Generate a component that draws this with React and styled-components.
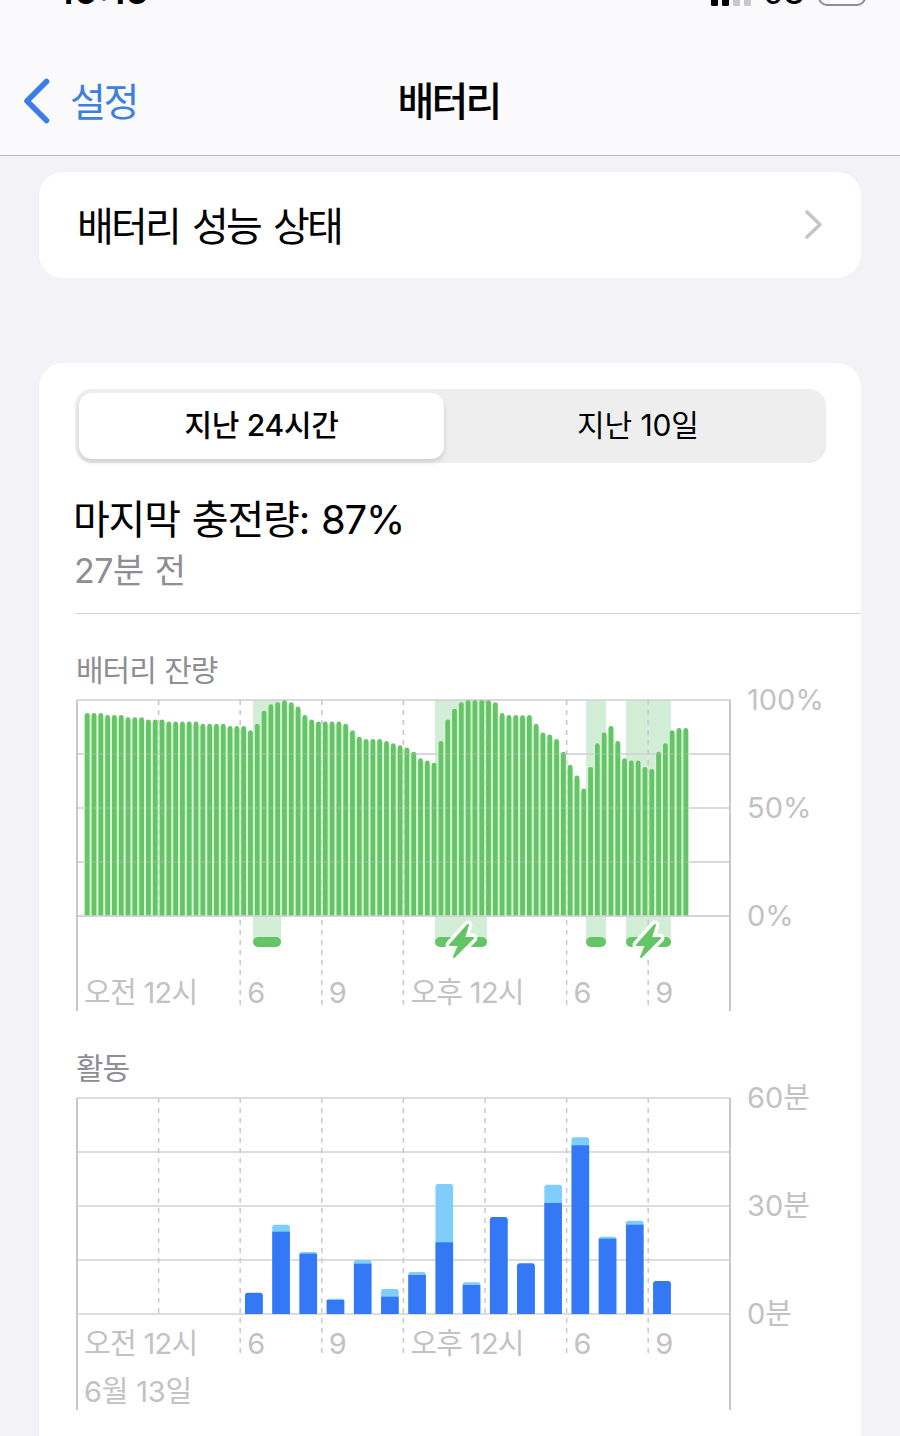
import React from 'react';
import styled, { createGlobalStyle } from 'styled-components';

const FONT = `Inter, "Noto Sans CJK KR", sans-serif`;

const GlobalStyle = createGlobalStyle`
  html, body {
    margin: 0;
    background: #f2f2f7;
    font-family: ${FONT};
  }
`;

// battery level in percent, one bar per 15 minutes
const LEVELS = [
  94, 94, 94, 93, 93, 93, 92, 92, 92, 91, 91, 91, 90, 90, 90, 90, 90, 89, 89, 89, 89, 88, 88, 88,
  86, 89, 95, 98, 99, 100, 99, 97, 93, 91, 90, 90, 90, 90, 89, 86, 83, 82, 82, 82, 81, 80, 79,
  78, 76, 73, 72, 71, 81, 91, 96, 99, 100, 100, 100, 100, 99, 94, 93, 93, 93, 93, 89, 85, 84, 82,
  76, 70, 65, 59, 69, 80, 85, 88, 81, 73, 72, 72, 69, 68, 76, 80, 86, 87, 87,
];

// [on-screen px, background px] per hour, starting from 6
const ACTIVITY = [
  [21.3, 0], [82.3, 7], [60.3, 1.7], [14, 1.3], [50.3, 3.7], [17.3, 7.7], [39, 3], [71.7, 58.3],
  [29, 2.7], [97, 0], [50.7, 0], [111, 18.3], [168.7, 8], [75.3, 2], [89.3, 4], [33, 0],
];

const CHARGE_BANDS = [
  { x: 176, w: 28 },
  { x: 358, w: 52, bolt: 384 },
  { x: 509, w: 20 },
  { x: 549, w: 45, bolt: 571 },
];

const SLOT = 81.6;
const PLOT_W = 653;
const PLOT_H = 216;
const GRID = '#d2d2d4';
const FRAME = '#c9c9cc';

const Page = styled.div`
  height: 1436px;
  overflow: hidden;
  background: #f2f2f7;
`;

const NavBar = styled.header`
  height: 156px;
  box-sizing: border-box;
  background: #fafafc;
  border-bottom: 1px solid #bcbcc0;
  overflow: hidden;
`;

const StatusRow = styled.div`
  height: 40px;
  margin-top: -29px;
  padding: 0 34px 0 58px;
  display: flex;
  align-items: flex-end;
  justify-content: space-between;
`;

const Clock = styled.span`
  font-size: 37px;
  line-height: 40px;
  font-weight: 600;
  color: #000;
`;

const StatusIcons = styled.div`
  display: flex;
  align-items: flex-end;
  gap: 13px;
`;

const StatusGlyph = styled.svg`
  display: block;
  margin-bottom: 5px;
`;

const Network = styled.span`
  margin-bottom: -2px;
  font-size: 30px;
  line-height: 40px;
  font-weight: 500;
  color: #000;
`;

const NavRow = styled.div`
  position: relative;
  margin-top: 65px;
  height: 50px;
  padding-left: 23px;
  display: flex;
  align-items: center;
  gap: 20px;
`;

const BackLabel = styled.span`
  padding-top: 2px;
  font-size: 39px;
  letter-spacing: -2.4px;
  color: #3f80dd;
  line-height: 50px;
`;

const NavTitle = styled.h1`
  position: absolute;
  left: 0;
  right: 3px;
  top: 1px;
  margin: 0;
  text-align: center;
  font-size: 40px;
  font-weight: 500;
  letter-spacing: -2.8px;
  line-height: 50px;
  color: #000;
`;

const Content = styled.main`
  padding: 16px 39px 0;
  display: flex;
  flex-direction: column;
  gap: 85px;
`;

const Card = styled.section`
  background: #fff;
  border-radius: 24px;
`;

const LinkRow = styled(Card)`
  height: 106px;
  box-sizing: border-box;
  padding: 0 38px 2px;
  display: flex;
  align-items: center;
  justify-content: space-between;
  font-size: 40px;
  letter-spacing: -2.8px;
  word-spacing: 4.5px;
  color: #000;
`;

const UsageCard = styled(Card)`
  padding: 26px 0 60px 36px;
`;

const Segments = styled.div`
  width: 751px;
  height: 74px;
  box-sizing: border-box;
  padding: 4px;
  border-radius: 17px;
  background: #eeeeef;
  display: grid;
  grid-template-columns: 365px 1fr;
`;

const Segment = styled.div`
  display: flex;
  align-items: center;
  justify-content: center;
  padding: 0 0 6px ${(p) => (p.$active ? 0 : 10)}px;
  font-size: 30px;
  letter-spacing: ${(p) => (p.$active ? -0.3 : -0.1)}px;
  color: #000;
  border-radius: 13px;
  font-weight: ${(p) => (p.$active ? 500 : 400)};
  background: ${(p) => (p.$active ? '#fff' : 'transparent')};
  box-shadow: ${(p) => (p.$active ? '0 3px 5px rgba(0, 0, 0, 0.14)' : 'none')};
`;

const Headline = styled.div`
  margin: 31px 0 0 -2px;
  font-size: 40px;
  line-height: 52px;
  letter-spacing: -1.2px;
  word-spacing: 2px;
  color: #000;
`;

const SubLine = styled.div`
  margin: 1px 0 0 -1px;
  font-size: 34px;
  line-height: 48px;
  letter-spacing: -0.5px;
  word-spacing: 2px;
  color: #8e8e93;
`;

const Divider = styled.hr`
  margin: 18px 0 0;
  border: 0;
  border-top: 1px solid #d4d4d6;
`;

const SectionTitle = styled.h2`
  margin: ${(p) => p.$top}px 0 0 1px;
  height: 40px;
  font-size: 30px;
  font-weight: 400;
  line-height: 40px;
  letter-spacing: -1px;
  word-spacing: 1px;
  color: #8e8e93;
`;

const ChartRow = styled.div`
  margin: 10px 0 0 2px;
  display: flex;
  gap: 17px;
`;

const Plot = styled.div`
  position: relative;
  width: ${PLOT_W}px;
`;

const PlotSvg = styled.svg`
  display: block;
  overflow: visible;
`;

const AxisRow = styled.div`
  position: absolute;
  left: 0;
  top: ${(p) => p.$top}px;
  display: grid;
  grid-template-columns: repeat(8, ${SLOT}px);
`;

const AxisLabel = styled.span`
  grid-column: span ${(p) => p.$span || 1};
  padding-left: 7px;
  font-size: 29px;
  line-height: 36px;
  letter-spacing: -0.7px;
  color: #c2c2c4;
  white-space: nowrap;
`;

const DateLabel = styled(AxisLabel)`
  position: absolute;
  left: 0;
  top: ${(p) => p.$top}px;
  letter-spacing: -0.2px;
`;

const YAxis = styled.div`
  height: ${PLOT_H}px;
  margin-top: ${(p) => p.$shift}px;
  display: flex;
  flex-direction: column;
  justify-content: space-between;
`;

const YLabel = styled.span`
  height: 0;
  display: flex;
  align-items: center;
  font-size: 29px;
  color: #c2c2c4;
  white-space: nowrap;
`;

function ChartGrid({ height, opacity = 1 }) {
  const rows = [0, 54, 108, 162, 216];
  const columns = [1, 2, 3, 4, 5, 6, 7];
  return (
    <g opacity={opacity}>
      {rows.map((y) => (
        <line key={y} x1="0" x2={PLOT_W} y1={y} y2={y} stroke={GRID} strokeWidth="1.5" />
      ))}
      {columns.map((c) => (
        <line
          key={c}
          x1={c * SLOT}
          x2={c * SLOT}
          y1="0"
          y2={c === 1 || c === 5 ? PLOT_H : height}
          stroke={FRAME}
          strokeWidth="1.5"
          strokeDasharray="5 5"
        />
      ))}
    </g>
  );
}

function Frame({ height }) {
  return (
    <g>
      <line x1="0" x2="0" y1="0" y2={height} stroke={FRAME} strokeWidth="2" />
      <line x1={PLOT_W} x2={PLOT_W} y1="0" y2={height} stroke={FRAME} strokeWidth="2" />
    </g>
  );
}

function Bolt({ x }) {
  const d = 'M7 -16 L-11 4 L-2 4 L-7 16 L12 -3 L3 -3 Z';
  return (
    <g transform={`translate(${x} ${PLOT_H + 25})`}>
      <path d={d} fill="#fff" stroke="#fff" strokeWidth="9" strokeLinejoin="round" />
      <path d={d} fill="#65c466" stroke="#65c466" strokeWidth="2" strokeLinejoin="round" />
    </g>
  );
}

function AxisLabels({ top }) {
  return (
    <AxisRow $top={top}>
      <AxisLabel $span={2}>오전 12시</AxisLabel>
      <AxisLabel>6</AxisLabel>
      <AxisLabel>9</AxisLabel>
      <AxisLabel $span={2}>오후 12시</AxisLabel>
      <AxisLabel>6</AxisLabel>
      <AxisLabel>9</AxisLabel>
    </AxisRow>
  );
}

function BatteryChart() {
  const pitch = PLOT_W / 96;
  return (
    <Plot>
      <PlotSvg width={PLOT_W} height="311" viewBox={`0 0 ${PLOT_W} 311`}>
        {CHARGE_BANDS.map((b) => (
          <rect key={b.x} x={b.x} y="0" width={b.w} height={PLOT_H + 26} fill="#d3eed6" />
        ))}
        <ChartGrid height={308} />
        {LEVELS.map((level, i) => {
          const h = (level / 100) * PLOT_H;
          const x = (i + 1) * pitch + 1;
          return (
            <g key={i}>
              <rect x={x - 1} y={PLOT_H - h + 3} width={pitch} height={h - 3} fill="#d6f8d6" />
              <path
                d={`M${x} ${PLOT_H} V${PLOT_H - h + 2.4} a2.4 2.4 0 0 1 4.8 0 V${PLOT_H} Z`}
                fill="#65c466"
              />
            </g>
          );
        })}
        <ChartGrid height={PLOT_H} opacity={0.25} />
        <line x1="0" x2={PLOT_W} y1={PLOT_H} y2={PLOT_H} stroke={GRID} strokeWidth="1.5" />
        {CHARGE_BANDS.map((b) => (
          <rect key={b.x} x={b.x} y={PLOT_H + 21} width={b.w} height="10" rx="5" fill="#65c466" />
        ))}
        {CHARGE_BANDS.filter((b) => b.bolt).map((b) => (
          <Bolt key={b.x} x={b.bolt} />
        ))}
        <Frame height={311} />
      </PlotSvg>
      <AxisLabels top={275} />
    </Plot>
  );
}

function ActivityChart() {
  const pitch = PLOT_W / 24;
  return (
    <Plot>
      <PlotSvg width={PLOT_W} height="312" viewBox={`0 0 ${PLOT_W} 312`}>
        <ChartGrid height={260} />
        {ACTIVITY.map(([dark, light], i) => {
          const x = (i + 6) * pitch + 4.8;
          const top = PLOT_H - dark - light;
          return (
            <g key={i}>
              <rect x={x} y={top} width="17.6" height={dark + light} rx="2.5" fill={light ? '#7fcdfb' : '#3478f6'} />
              <rect x={x} y={PLOT_H - dark + (light ? 0 : 2)} width="17.6" height={dark - (light ? 0 : 2)} fill="#3478f6" />
            </g>
          );
        })}
        <Frame height={312} />
      </PlotSvg>
      <AxisLabels top={228} />
      <DateLabel $top={276}>6월 13일</DateLabel>
    </Plot>
  );
}

export default function App() {
  return (
    <Page>
      <GlobalStyle />
      <NavBar>
        <StatusRow>
          <Clock>10:15</Clock>
          <StatusIcons>
            <StatusGlyph width="40" height="24" viewBox="0 0 40 24">
              <rect x="0" y="14" width="7" height="10" rx="1.5" fill="#000" />
              <rect x="11" y="9" width="7" height="15" rx="1.5" fill="#000" />
              <rect x="22" y="5" width="7" height="19" rx="1.5" fill="#c8c8ca" />
              <rect x="33" y="0" width="7" height="24" rx="1.5" fill="#c8c8ca" />
            </StatusGlyph>
            <Network>5G</Network>
            <StatusGlyph width="48" height="24" viewBox="0 0 48 24">
              <rect x="1" y="-10" width="46" height="33" rx="8" fill="none" stroke="#8e8e93" strokeWidth="2" />
              <rect x="5" y="-10" width="38" height="28" rx="3" fill="#000" />
            </StatusGlyph>
          </StatusIcons>
        </StatusRow>
        <NavRow>
          <svg width="27" height="46" viewBox="0 0 27 46">
            <path d="M23.5 3.5 L4 23 L23.5 42.5" fill="none" stroke="#3a7de6" strokeWidth="5.5" strokeLinecap="round" strokeLinejoin="round" />
          </svg>
          <BackLabel>설정</BackLabel>
          <NavTitle>배터리</NavTitle>
        </NavRow>
      </NavBar>
      <Content>
        <LinkRow>
          <span>배터리 성능 상태</span>
          <svg width="19" height="31" viewBox="0 0 19 31">
            <path d="M3 3 L16 15.5 L3 28" fill="none" stroke="#c5c5c8" strokeWidth="3.6" strokeLinecap="round" strokeLinejoin="round" />
          </svg>
        </LinkRow>
        <UsageCard>
          <Segments>
            <Segment $active>지난 24시간</Segment>
            <Segment>지난 10일</Segment>
          </Segments>
          <Headline>마지막 충전량: 87%</Headline>
          <SubLine>27분 전</SubLine>
          <Divider />
          <SectionTitle $top={36}>배터리 잔량</SectionTitle>
          <ChartRow>
            <BatteryChart />
            <YAxis $shift={-1}>
              <YLabel>100%</YLabel>
              <YLabel>50%</YLabel>
              <YLabel>0%</YLabel>
            </YAxis>
          </ChartRow>
          <SectionTitle $top={37}>활동</SectionTitle>
          <ChartRow>
            <ActivityChart />
            <YAxis $shift={-3}>
              <YLabel>60분</YLabel>
              <YLabel>30분</YLabel>
              <YLabel>0분</YLabel>
            </YAxis>
          </ChartRow>
        </UsageCard>
      </Content>
    </Page>
  );
}
